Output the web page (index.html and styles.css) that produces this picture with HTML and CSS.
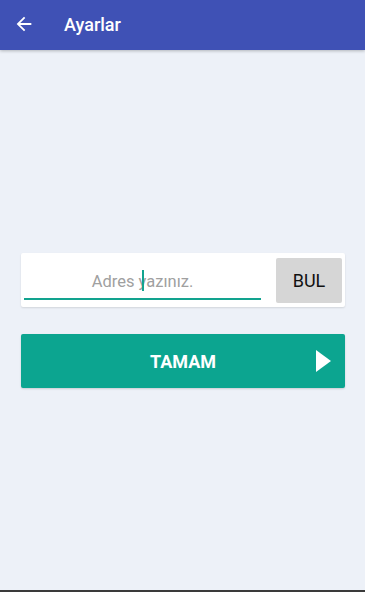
FILE: index.html
```html
<!DOCTYPE html>
<html>
<head>
<meta charset="utf-8">
<link rel="stylesheet" href="styles.css">
</head>
<body>
<div class="screen">
  <header class="appbar">
    <svg class="back" width="22" height="22" viewBox="0 0 24 24"><path d="M20 11H7.83l5.59-5.59L12 4l-8 8 8 8 1.41-1.41L7.83 13H20v-2z" fill="#fff"/></svg>
    <span class="title">Ayarlar</span>
  </header>
  <main class="content">
    <div class="card">
      <div class="field">
        <span class="hint">Adres yazınız.</span>
        <span class="cursor"></span>
      </div>
      <button class="bul">BUL</button>
    </div>
    <button class="ok">
      <span>TAMAM</span>
      <svg class="play" width="15" height="22" viewBox="0 0 15 22"><path d="M0 0L15 11L0 22Z" fill="#fff"/></svg>
    </button>
  </main>
  <div class="navline"></div>
</div>
</body>
</html>
```
FILE: styles.css
```css
* { box-sizing: border-box; }
html, body { margin: 0; padding: 0; }
body {
  width: 365px;
  height: 592px;
  font-family: Roboto, "Noto Sans", sans-serif;
  background: #edf1f8;
  overflow: hidden;
}
.screen {
  height: 592px;
  display: flex;
  flex-direction: column;
}
.appbar {
  height: 50px;
  background: #3f51b5;
  display: flex;
  align-items: center;
  padding-left: 13px;
  box-shadow: 0 1px 3px rgba(0,0,0,0.25);
  position: relative;
  z-index: 1;
  flex-shrink: 0;
}
.back { margin-top: -2px; }
.title {
  color: #fff;
  font-size: 18px;
  font-weight: 500;
  margin-left: 29px;
  margin-top: -2px;
}
.content {
  flex: 1;
  padding: 203px 20px 0 21px;
  display: flex;
  flex-direction: column;
}
.card {
  height: 54px;
  background: #fff;
  border-radius: 2px;
  box-shadow: 0 1px 2px rgba(0,0,0,0.12);
  display: flex;
  align-items: flex-start;
  padding: 5px 3px 0 3px;
}
.field {
  width: 237px;
  height: 42px;
  border-bottom: 2px solid #12a38f;
  position: relative;
  display: flex;
  align-items: center;
  justify-content: center;
  padding-top: 6px;
}
.hint {
  color: #a0a0a0;
  font-size: 16.5px;
}
.cursor {
  position: absolute;
  left: 118px;
  top: 12px;
  width: 2px;
  height: 21px;
  background: #12a38f;
}
.bul {
  margin-left: 15px;
  width: 66px;
  height: 45px;
  border: none;
  border-radius: 2px;
  background: #d6d6d6;
  font-family: Roboto, sans-serif;
  font-size: 18px;
  color: #111;
  padding: 0;
}
.ok {
  margin-top: 27px;
  height: 54px;
  border: none;
  border-radius: 2px;
  background: #0ca590;
  color: #fff;
  font-family: Roboto, sans-serif;
  font-weight: 700;
  font-size: 18px;
  position: relative;
  display: flex;
  align-items: center;
  justify-content: center;
  padding: 0;
  box-shadow: 0 1px 2px rgba(0,0,0,0.15);
}
.play {
  position: absolute;
  right: 14px;
  top: 16px;
}
.navline {
  height: 2px;
  background: #3a3a3a;
  flex-shrink: 0;
}
```
